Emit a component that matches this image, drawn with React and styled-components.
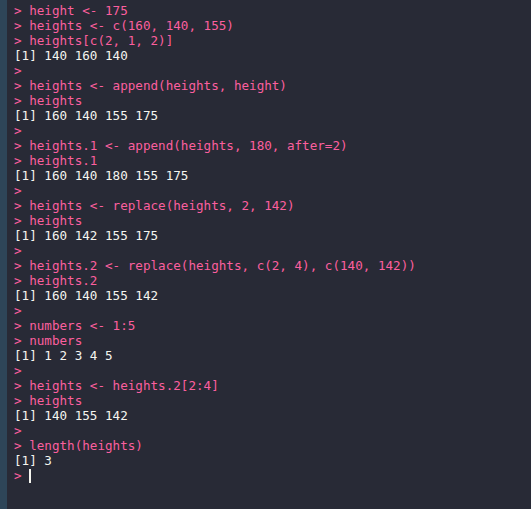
import React from "react";
import styled, { createGlobalStyle } from "styled-components";

const Global = createGlobalStyle`
  html, body {
    margin: 0;
    padding: 0;
    background: #282a36;
  }
`;

const Console = styled.div`
  min-height: 509px;
  box-sizing: border-box;
  background: #282a36;
  border-left: 7px solid #2e4558;
  padding: 3px 0 0 7px;
  font-family: "DejaVu Sans Mono", "Liberation Mono", monospace;
  font-size: 12.6px;
  line-height: 15px;
  white-space: pre;
`;

const Line = styled.div`
  height: 15px;
  color: ${(p) => (p.input ? "#fb5f9e" : "#f5f5ef")};
`;

const Cursor = styled.span`
  display: inline-block;
  width: 2px;
  height: 14px;
  background: #f5f5ef;
  vertical-align: -3px;
`;

const lines = [
  [1, "> height <- 175"],
  [1, "> heights <- c(160, 140, 155)"],
  [1, "> heights[c(2, 1, 2)]"],
  [0, "[1] 140 160 140"],
  [1, ">"],
  [1, "> heights <- append(heights, height)"],
  [1, "> heights"],
  [0, "[1] 160 140 155 175"],
  [1, ">"],
  [1, "> heights.1 <- append(heights, 180, after=2)"],
  [1, "> heights.1"],
  [0, "[1] 160 140 180 155 175"],
  [1, ">"],
  [1, "> heights <- replace(heights, 2, 142)"],
  [1, "> heights"],
  [0, "[1] 160 142 155 175"],
  [1, ">"],
  [1, "> heights.2 <- replace(heights, c(2, 4), c(140, 142))"],
  [1, "> heights.2"],
  [0, "[1] 160 140 155 142"],
  [1, ">"],
  [1, "> numbers <- 1:5"],
  [1, "> numbers"],
  [0, "[1] 1 2 3 4 5"],
  [1, ">"],
  [1, "> heights <- heights.2[2:4]"],
  [1, "> heights"],
  [0, "[1] 140 155 142"],
  [1, ">"],
  [1, "> length(heights)"],
  [0, "[1] 3"],
];

const App = () => {
  return (
    <>
      <Global />
      <Console>
        {lines.map(([inp, text], i) => (
          <Line key={i} input={inp ? 1 : 0}>
            {text}
          </Line>
        ))}
        <Line input={1}>
          {"> "}
          <Cursor />
        </Line>
      </Console>
    </>
  );
};

export default App;
